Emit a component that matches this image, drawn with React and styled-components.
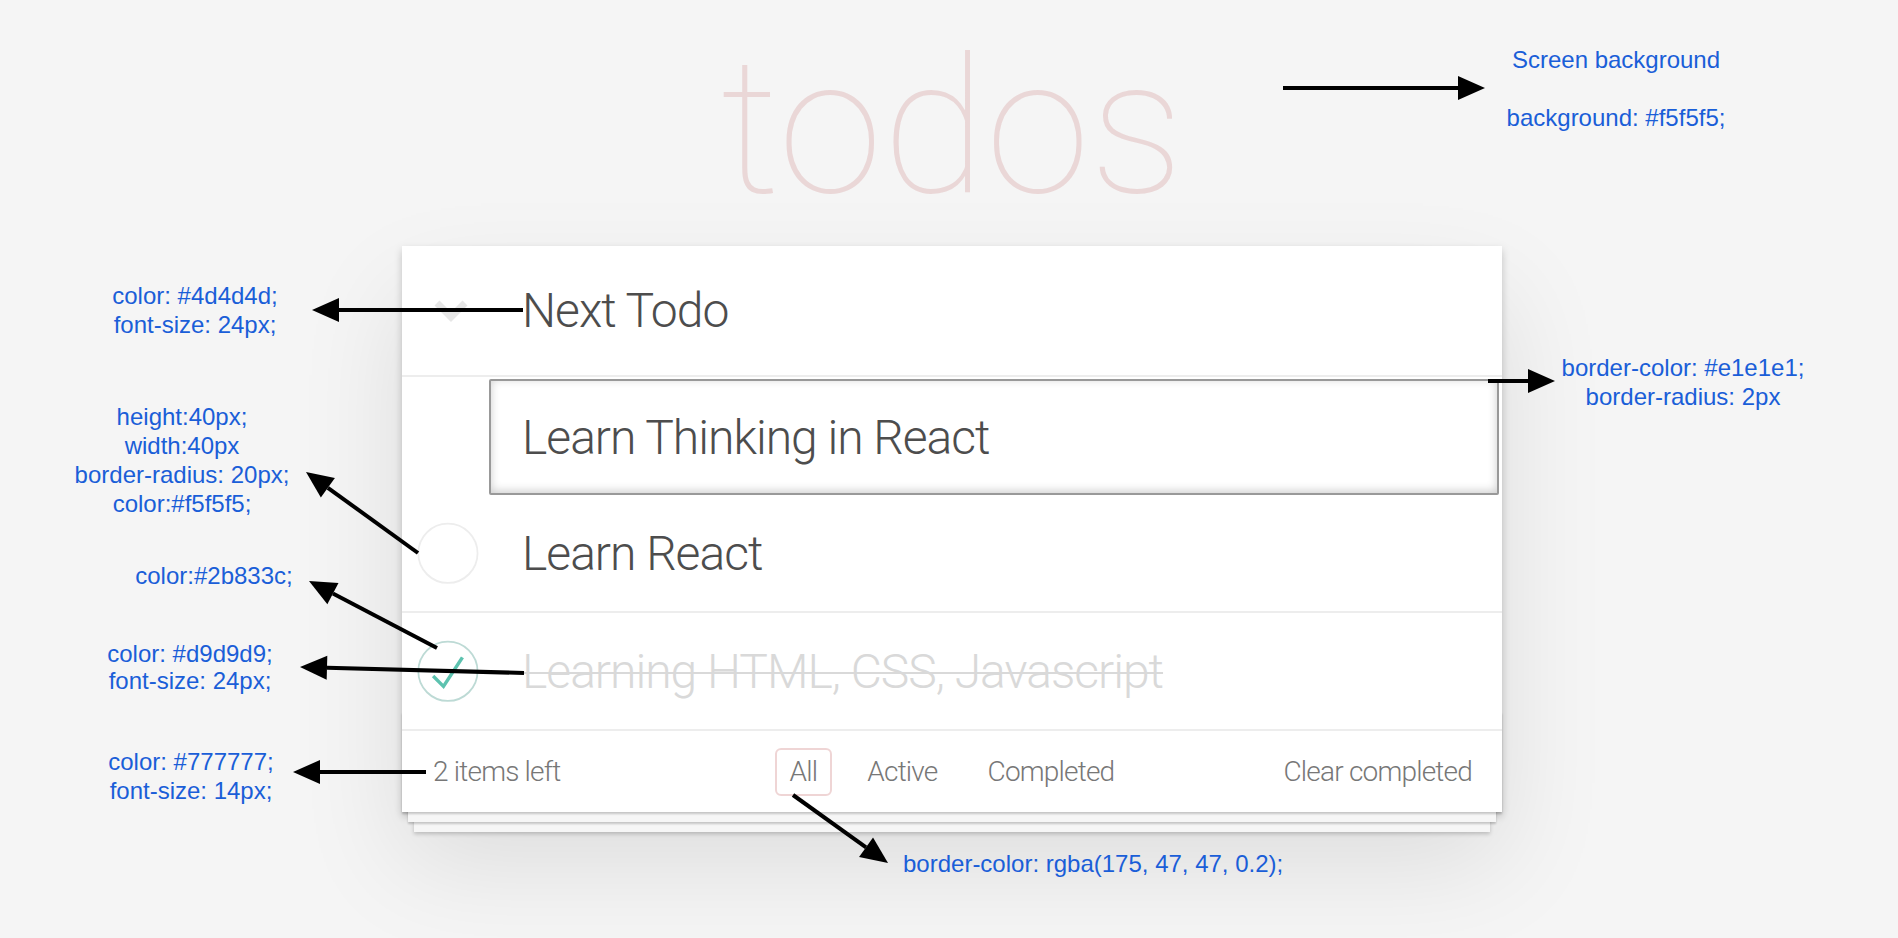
import React from 'react'
import styled, { createGlobalStyle } from 'styled-components'

const GlobalStyle = createGlobalStyle`
  html, body {
    margin: 0;
    padding: 0;
    background: #f5f5f5;
  }
  * {
    box-sizing: border-box;
  }
`

const Page = styled.div`
  position: relative;
  width: 100%;
  height: 938px;
  overflow: hidden;
  background: #f5f5f5;
  font-family: Roboto, 'Liberation Sans', sans-serif;
`

const Main = styled.main`
  display: flex;
  flex-direction: column;
  align-items: center;
  padding-top: 33px;
  padding-left: 6px;
`

const Title = styled.h1`
  margin: 0 0 24px;
  font-size: 189px;
  line-height: 189px;
  font-weight: 100;
  color: rgba(175, 47, 47, 0.15);
  text-align: center;
`

const Card = styled.section`
  width: 1100px;
  background: #fff;
  box-shadow: 0 4px 8px 0 rgba(0, 0, 0, 0.2), 0 50px 100px 0 rgba(0, 0, 0, 0.1);
`

const Header = styled.div`
  display: flex;
  align-items: center;
  height: 131px;
  border-bottom: 2px solid #ededed;
`

const Gutter = styled.div`
  display: flex;
  align-items: center;
  flex: 0 0 120px;
  padding-left: ${(p) => p.$pad || 0}px;
`

const ItemText = styled.span`
  font-size: 48px;
  font-weight: 300;
  letter-spacing: -1px;
  color: ${(p) => (p.$done ? '#d9d9d9' : '#4d4d4d')};
  text-decoration: ${(p) => (p.$done ? 'line-through' : 'none')};
  text-decoration-thickness: 2px;
  white-space: nowrap;
`

const List = styled.ul`
  list-style: none;
  margin: 0;
  padding: 0;
`

const Row = styled.li`
  display: flex;
  height: 118px;
  border-bottom: ${(p) => (p.$editing ? 'none' : '2px solid #ededed')};
  padding-top: ${(p) => (p.$editing ? 2 : 0)}px;
  align-items: ${(p) => (p.$editing ? 'flex-start' : 'center')};
`

const EditBox = styled.div`
  display: flex;
  align-items: center;
  margin-left: 87px;
  width: 1010px;
  height: 116px;
  padding: 0 32px 0 31px;
  border: 2px solid #999;
  border-radius: 2px;
  box-shadow: inset 0 -2px 10px 0 rgba(0, 0, 0, 0.2);
  font-size: 48px;
  font-weight: 300;
  letter-spacing: -1px;
  color: #4d4d4d;
  white-space: nowrap;
`

const Footer = styled.footer`
  position: relative;
  display: grid;
  grid-template-columns: 1fr auto 1fr;
  align-items: center;
  height: 81px;
  padding: 0 30px;
  color: #777;
  font-size: 28px;
  font-weight: 300;
  letter-spacing: -0.8px;

  &::before {
    content: '';
    position: absolute;
    left: 0;
    right: 0;
    bottom: 0;
    height: 100px;
    overflow: hidden;
    box-shadow: 0 2px 2px rgba(0, 0, 0, 0.2), 0 16px 0 -6px #f6f6f6,
      0 18px 2px -6px rgba(0, 0, 0, 0.2), 0 32px 0 -12px #f6f6f6,
      0 34px 4px -12px rgba(0, 0, 0, 0.2);
    pointer-events: none;
  }
`

const Count = styled.span`
  justify-self: start;
  padding-left: 1px;
`

const Filters = styled.ul`
  display: flex;
  align-items: center;
  gap: 8px;
  list-style: none;
  margin: 0;
  padding: 0;
`

const Filter = styled.a`
  display: block;
  margin: 0 6px;
  padding: 5px 13px;
  line-height: 34px;
  border: 2px solid ${(p) => (p.$active ? 'rgba(175, 47, 47, 0.2)' : 'transparent')};
  border-radius: 6px;
  color: inherit;
  text-decoration: none;
`

const Clear = styled.span`
  justify-self: end;
`

const Overlay = styled.svg`
  position: absolute;
  left: 0;
  top: 0;
  pointer-events: none;
`

const Note = styled.div`
  position: absolute;
  left: ${(p) => p.$x}px;
  top: ${(p) => p.$y}px;
  transform: ${(p) => (p.$left ? 'none' : 'translateX(-50%)')};
  text-align: ${(p) => (p.$left ? 'left' : 'center')};
  font-family: 'Liberation Sans', Arial, sans-serif;
  font-size: 24px;
  line-height: ${(p) => p.$lh || 29}px;
  color: #1a5ed8;
  white-space: nowrap;
`

const Chevron = () => (
  <svg width='36' height='24' viewBox='0 0 36 24'>
    <polyline
      points='4,4 18,18 32,4'
      fill='none'
      stroke='#e6e6e6'
      strokeWidth='7'
    />
  </svg>
)

const Toggle = ({ done }) => (
  <svg width='80' height='80' viewBox='-10 -18 100 135'>
    <circle
      cx='50'
      cy='50'
      r='50'
      fill='none'
      stroke={done ? '#bddad5' : '#ededed'}
      strokeWidth='3'
    />
    {done && <path fill='#5dc2af' d='M72 25L42 71 27 56l-4 4 20 20 34-52z' />}
  </svg>
)

const Arrow = ({ from, to }) => {
  const [x1, y1] = from
  const [x2, y2] = to
  const len = Math.hypot(x2 - x1, y2 - y1)
  const ux = (x2 - x1) / len
  const uy = (y2 - y1) / len
  const head = 27
  const half = 12
  const bx = x2 - ux * head
  const by = y2 - uy * head
  const pts = [
    [x2, y2],
    [bx - uy * half, by + ux * half],
    [bx + uy * half, by - ux * half],
  ]
  return (
    <g>
      <line x1={x1} y1={y1} x2={bx} y2={by} stroke='#000' strokeWidth='4' />
      <polygon points={pts.map((p) => p.join(',')).join(' ')} fill='#000' />
    </g>
  )
}

const arrows = [
  { from: [1283, 88], to: [1485, 88] },
  { from: [523, 310], to: [312, 310] },
  { from: [1488, 381], to: [1555, 381] },
  { from: [418, 553], to: [306, 472] },
  { from: [437, 648], to: [309, 581] },
  { from: [524, 673], to: [300, 667] },
  { from: [426, 772], to: [293, 772] },
  { from: [793, 795], to: [888, 863] },
]

const notes = [
  { x: 1616, y: 45, lines: ['Screen background', '\u00a0', 'background: #f5f5f5;'] },
  { x: 195, y: 281, lines: ['color: #4d4d4d;', 'font-size: 24px;'] },
  { x: 182, y: 402, lines: ['height:40px;', 'width:40px', 'border-radius: 20px;', 'color:#f5f5f5;'] },
  { x: 214, y: 561, lines: ['color:#2b833c;'] },
  { x: 190, y: 640, lh: 27, lines: ['color: #d9d9d9;', 'font-size: 24px;'] },
  { x: 191, y: 747, lines: ['color: #777777;', 'font-size: 14px;'] },
  { x: 1683, y: 353, lines: ['border-color: #e1e1e1;', 'border-radius: 2px'] },
  { x: 903, y: 849, left: true, lines: ['border-color: rgba(175, 47, 47, 0.2);'] },
]

const todos = [
  { text: 'Learn Thinking in React', editing: true },
  { text: 'Learn React', done: false },
  { text: 'Learning HTML, CSS, Javascript', done: true },
]

const App = () => {
  return (
    <Page>
      <GlobalStyle />
      <Main>
        <Title>todos</Title>
        <Card>
          <Header>
            <Gutter $pad={31}>
              <Chevron />
            </Gutter>
            <ItemText>Next Todo</ItemText>
          </Header>
          <List>
            {todos.map((t) =>
              t.editing ? (
                <Row key={t.text} $editing>
                  <EditBox>{t.text}</EditBox>
                </Row>
              ) : (
                <Row key={t.text}>
                  <Gutter>
                    <Toggle done={t.done} />
                  </Gutter>
                  <ItemText $done={t.done}>{t.text}</ItemText>
                </Row>
              )
            )}
          </List>
          <Footer>
            <Count>2 items left</Count>
            <Filters>
              <li>
                <Filter $active>All</Filter>
              </li>
              <li>
                <Filter>Active</Filter>
              </li>
              <li>
                <Filter>Completed</Filter>
              </li>
            </Filters>
            <Clear>Clear completed</Clear>
          </Footer>
        </Card>
      </Main>
      <Overlay width='1898' height='938'>
        {arrows.map((a, i) => (
          <Arrow key={i} from={a.from} to={a.to} />
        ))}
      </Overlay>
      {notes.map((n, i) => (
        <Note key={i} $x={n.x} $y={n.y} $lh={n.lh} $left={n.left}>
          {n.lines.map((l, j) => (
            <div key={j}>{l}</div>
          ))}
        </Note>
      ))}
    </Page>
  )
}

export default App
